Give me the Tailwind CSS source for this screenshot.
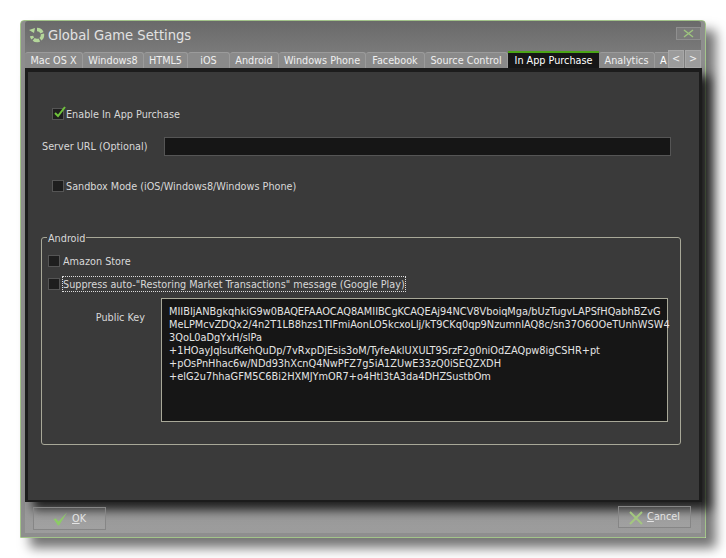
<!DOCTYPE html>
<html><head><meta charset="utf-8">
<script src="https://cdn.jsdelivr.net/npm/@tailwindcss/browser@4"></script>
</head>
<body class="bg-white w-[726px] h-[558px] overflow-hidden font-['DejaVu_Sans_Condensed','DejaVu_Sans',sans-serif] text-[10.75px] text-[#d8d8d8]">
<div class="pt-[20px] pl-[20px]">
<div class="relative w-[686px] h-[518px] border border-[#a3c48a] rounded-t-[4px] bg-gradient-to-b from-[#6a6a6a] via-[#8a8a8a] via-[12%] to-[#9c9c9c] shadow-[10px_10px_12px_rgba(0,0,0,0.55),inset_0_-4px_0_#8e8e8e,inset_4px_0_0_#8e8e8e,inset_-4px_0_0_#8e8e8e] flex flex-col pl-[4px] pr-[4px]">
  <div class="h-[31px] flex items-center relative pb-[4px]">
    <svg class="w-[18px] h-[16px] ml-[3px]" viewBox="0 0 18 16"><path d="M9 2.5 A5.5 5.5 0 1 1 3.6 9" fill="none" stroke="#b4d79a" stroke-width="3.4" stroke-dasharray="6 1.2"/><path d="M1 3 L7 1 L6 6 Z" fill="#b4d79a"/></svg>
    <span class="ml-[2px] text-[14.6px] text-[#e2e2e2]">Global Game Settings</span>
    <div class="absolute right-[0px] top-[6px] w-[25px] h-[13px] border border-[#8f8f8f] bg-[#7b7b7b] flex items-center justify-center">
      <svg class="w-[11px] h-[9px]" viewBox="0 0 11 9"><path d="M1 1 L10 8 M10 1 L1 8" stroke="#9dc47e" stroke-width="1.5"/></svg>
    </div>
  </div>
  <div class="h-[16px] flex items-end text-[#efefef] relative z-10">
    <div class="w-[58px] h-[16px] pt-[2px] rounded-t-[3px] bg-[#8a8a8a] border-t border-r border-[#9b9b9b] flex items-center justify-center">Mac OS X</div>
    <div class="w-[61px] h-[16px] pt-[2px] rounded-t-[3px] bg-[#8a8a8a] border-t border-r border-[#9b9b9b] flex items-center justify-center">Windows8</div>
    <div class="w-[44px] h-[16px] pt-[2px] rounded-t-[3px] bg-[#8a8a8a] border-t border-r border-[#9b9b9b] flex items-center justify-center">HTML5</div>
    <div class="w-[42px] h-[16px] pt-[2px] rounded-t-[3px] bg-[#8a8a8a] border-t border-r border-[#9b9b9b] flex items-center justify-center">iOS</div>
    <div class="w-[49px] h-[16px] pt-[2px] rounded-t-[3px] bg-[#8a8a8a] border-t border-r border-[#9b9b9b] flex items-center justify-center">Android</div>
    <div class="w-[87px] h-[16px] pt-[2px] rounded-t-[3px] bg-[#8a8a8a] border-t border-r border-[#9b9b9b] flex items-center justify-center">Windows Phone</div>
    <div class="w-[59px] h-[16px] pt-[2px] rounded-t-[3px] bg-[#8a8a8a] border-t border-r border-[#9b9b9b] flex items-center justify-center">Facebook</div>
    <div class="w-[83px] h-[16px] pt-[2px] rounded-t-[3px] bg-[#8a8a8a] border-t border-r border-[#9b9b9b] flex items-center justify-center">Source Control</div>
    <div class="w-[91px] h-[17px] pt-[1px] bg-[#161616] border-t-2 border-[#4ba516] text-white flex items-center justify-center">In App Purchase</div>
    <div class="w-[56px] h-[16px] pt-[2px] rounded-t-[3px] bg-[#8a8a8a] border-t border-r border-[#9b9b9b] flex items-center justify-center">Analytics</div>
    <div class="w-[13px] h-[16px] pt-[2px] bg-[#8a8a8a] border-t border-[#9b9b9b] overflow-hidden pl-[5px] flex items-center text-white">A</div>
    <div class="w-[16px] h-[18px] bg-[#9c9c9c] border border-[#a8a8a8] flex items-center justify-center">&lt;</div>
    <div class="w-[16px] ml-[1px] h-[18px] bg-[#9c9c9c] border border-[#a8a8a8] flex items-center justify-center">&gt;</div>
  </div>
  <div class="w-[677px] h-[434px] bg-[#3a3a3a] border-t-[4px] border-l-[3px] border-r-[3px] border-b-[2px] border-[#1c1c1c] shadow-[8px_8px_10px_rgba(0,0,0,0.8)] flex flex-col relative">
    <div class="flex items-center pl-[24px] mt-[33px] h-[18px]">
      <span class="w-[12px] h-[12px] bg-[#1e1e1e] border border-[#555] relative"><svg class="absolute -top-[3px] left-0 w-[14px] h-[13px]" viewBox="0 0 14 13"><path d="M2 7 L5 10 L12 1" fill="none" stroke="#6fc23b" stroke-width="2"/></svg></span>
      <span class="ml-[2px] pt-[2px]">Enable In App Purchase</span>
    </div>
    <div class="flex items-center mt-[13px] pl-[14px] h-[20px]">
      <span class="w-[122px] pt-[2px]">Server URL (Optional)</span>
      <div class="w-[507px] h-[19px] bg-[#161616] border border-[#555]"></div>
    </div>
    <div class="flex items-center pl-[24px] mt-[21px] h-[18px]">
      <span class="w-[12px] h-[12px] bg-[#1e1e1e] border border-[#555]"></span>
      <span class="ml-[2px] pt-[2px]">Sandbox Mode (iOS/Windows8/Windows Phone)</span>
    </div>
    <div class="relative ml-[13px] mt-[42px] w-[640px] h-[208px] border border-[#a8a898] rounded-[3px]">
      <span class="absolute -top-[6px] left-[5px] bg-[#3a3a3a] px-[1px] leading-[14px]">Android</span>
      <div class="flex items-center pl-[6px] mt-[14px] h-[18px]">
        <span class="w-[12px] h-[12px] bg-[#1e1e1e] border border-[#555]"></span>
        <span class="ml-[3px] pt-[2px]">Amazon Store</span>
      </div>
      <div class="flex items-center pl-[6px] mt-[5px] h-[18px]">
        <span class="w-[12px] h-[12px] bg-[#1e1e1e] border border-[#555]"></span>
        <span class="ml-[2px] border border-dotted border-[#ddd] leading-[13px] pt-[1px]">Suppress auto-"Restoring Market Transactions" message (Google Play)</span>
      </div>
      <div class="flex mt-[5px]">
        <span class="w-[119px] text-right pr-[16px] pt-[12px]">Public Key</span>
        <div class="w-[507px] h-[124px] bg-[#161616] border border-[#a8a898] px-[7px] pt-[6px] leading-[13px] text-[10.88px] text-[#e4e4e4] whitespace-nowrap">MIIBIjANBgkqhkiG9w0BAQEFAAOCAQ8AMIIBCgKCAQEAj94NCV8VboiqMga/bUzTugvLAPSfHQabhBZvG<br>MeLPMcvZDQx2/4n2T1LB8hzs1TIFmiAonLO5kcxoLlj/kT9CKq0qp9NzumnIAQ8c/sn37O6OOeTUnhWSW4<br>3QoL0aDgYxH/slPa<br>+1HOayJqlsufKehQuDp/7vRxpDjEsis3oM/TyfeAklUXULT9SrzF2g0niOdZAQpw8igCSHR+pt<br>+pOsPnHhac6w/NDd93hXcnQ4NwPFZ7g5iA1ZUwE33zQ0iSEQZXDH<br>+elG2u7hhaGFM5C6Bi2HXMJYmOR7+o4Htl3tA3da4DHZSustbOm</div>
      </div>
    </div>
  </div>
  <div class="relative z-10 flex justify-between items-start pl-[8px] pr-[10px] mt-[5px] text-[#e4e4e4]">
    <div class="w-[73px] h-[23px] pt-[1px] border border-[#868686] bg-white/5 flex items-center justify-center gap-[4px]">
      <svg class="w-[15px] h-[14px]" viewBox="0 0 15 14"><path d="M0.5 7 L3 6.5 L5.5 9.5 L14 0.5 L6 13.5 L5 13.5 Z" fill="#8ccb66"/></svg><span><u>O</u>K</span>
    </div>
    <div class="w-[73px] h-[22px] pt-[1px] border border-[#868686] bg-white/5 flex items-center justify-center gap-[4px] -mt-[1px]">
      <svg class="w-[14px] h-[14px]" viewBox="0 0 14 14"><path d="M1 1 L13 13 M13 1 L1 13" stroke="#a3c77f" stroke-width="2"/></svg><span><u>C</u>ancel</span>
    </div>
  </div>
</div>
</div>
</body></html>
